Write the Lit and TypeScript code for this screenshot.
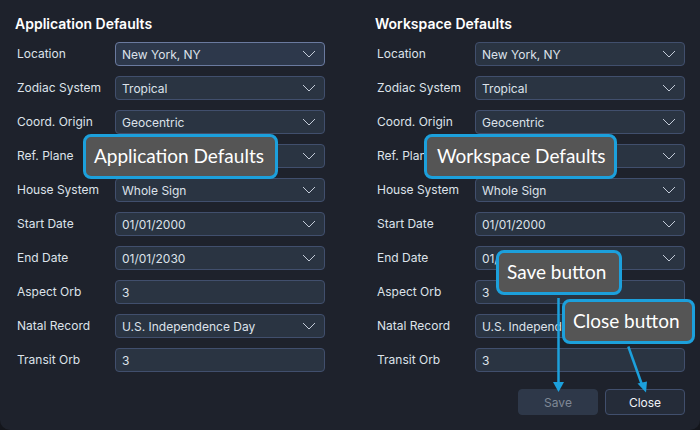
import { LitElement, html, css, svg } from "lit";
import { customElement } from "lit/decorators.js";

type Field = { label: string; value: string; select: boolean; focus?: boolean };

// the Ref. Plane value sits behind the callouts in the reference, so it stays empty
const fields = (focusFirst: boolean): Field[] => [
  { label: "Location", value: "New York, NY", select: true, focus: focusFirst },
  { label: "Zodiac System", value: "Tropical", select: true },
  { label: "Coord. Origin", value: "Geocentric", select: true },
  { label: "Ref. Plane", value: "", select: true },
  { label: "House System", value: "Whole Sign", select: true },
  { label: "Start Date", value: "01/01/2000", select: true },
  { label: "End Date", value: "01/01/2030", select: true },
  { label: "Aspect Orb", value: "3", select: false },
  { label: "Natal Record", value: "U.S. Independence Day", select: true },
  { label: "Transit Orb", value: "3", select: false },
];

const chevron = html`<svg class="chev" width="14" height="8" viewBox="0 0 14 8" fill="none" stroke="#c3cbd8" stroke-width="1"><path d="M1 1l6 6 6-6"/></svg>`;

const arrows = svg`
  <path d="M558.5 298V383" stroke="#1ca0dc" stroke-width="2.500"/>
  <path d="M553 382h11l-5.500 10z" fill="#1ca0dc"/>
  <path d="M628.300 346.500L641.700 384" stroke="#1ca0dc" stroke-width="2.500"/>
  <path d="M637.500 383.500l9.500-2 -1 11z" fill="#1ca0dc"/>
`;

@customElement("app-root")
export class AppRoot extends LitElement {
  static styles = css`
    :host {
      display: block;
      width: 700px;
      height: 430px;
      position: relative;
      overflow: hidden;
      background: #14161c;
      font-family: Inter, "Liberation Sans", sans-serif;
    }
    .window {
      height: 430px;
      box-sizing: border-box;
      background: #1e222c;
      border-radius: 0 0 10px 10px;
      padding: 15px;
      display: flex;
      flex-direction: column;
    }
    .cols {
      display: grid;
      grid-template-columns: 310px 310px;
      column-gap: 50px;
    }
    h2 {
      margin: 0 0 9px;
      font-size: 14px;
      line-height: 18px;
      font-weight: 600;
      color: #ffffff;
    }
    .rows {
      display: grid;
      row-gap: 10px;
    }
    .row {
      display: grid;
      grid-template-columns: 100px 210px;
      height: 24px;
      align-items: center;
    }
    .label {
      padding: 0 0 2px 2px;
      font-size: 12px;
      color: #dde2ea;
    }
    .field {
      box-sizing: border-box;
      height: 24px;
      display: flex;
      align-items: center;
      justify-content: space-between;
      padding: 0 8px 0 6px;
      background: #2a3442;
      border: 1px solid #414f6d;
      border-radius: 4px;
      font-size: 12px;
      color: #dde2ea;
    }
    .field.focus {
      background: #2d384b;
      border-color: #6a7a9f;
    }
    .chev {
      flex: none;
      margin-top: -1px;
    }
    .actions {
      margin-top: auto;
      display: flex;
      justify-content: flex-end;
      gap: 7px;
    }
    button {
      width: 80px;
      height: 26px;
      padding: 0;
      border-radius: 4px;
      font: inherit;
      font-size: 12px;
      background: #252c39;
      border: 1px solid #414f6d;
      color: #f0f2f6;
    }
    button[disabled] {
      background: #2e3849;
      border-color: #2e3849;
      color: #7f8896;
    }
    .callout {
      position: absolute;
      box-sizing: border-box;
      height: 45px;
      display: flex;
      align-items: center;
      padding: 0 0 2px 8px;
      background: #555555;
      border: 3px solid #1ca0dc;
      border-radius: 8px;
      font-family: Lato, "Open Sans", sans-serif;
      font-size: 19px;
      color: #ffffff;
      white-space: nowrap;
    }
    .app {
      left: 83px;
      top: 134px;
      width: 195px;
    }
    .work {
      left: 424px;
      top: 134px;
      width: 193px;
      padding-left: 10px;
    }
    .save {
      left: 496px;
      top: 250px;
      width: 126px;
    }
    .close {
      left: 562px;
      top: 299px;
      width: 133px;
    }
    .arrows {
      position: absolute;
      inset: 0;
      pointer-events: none;
    }
  `;

  column(title: string, focusFirst: boolean) {
    return html`<section>
      <h2>${title}</h2>
      <div class="rows">
        ${fields(focusFirst).map(
          (f) => html`<div class="row">
            <span class="label">${f.label}</span>
            <div class="field ${f.focus ? "focus" : ""}">
              <span>${f.value}</span>${f.select ? chevron : null}
            </div>
          </div>`
        )}
      </div>
    </section>`;
  }

  render() {
    return html`
      <div class="window">
        <div class="cols">
          ${this.column("Application Defaults", true)}
          ${this.column("Workspace Defaults", false)}
        </div>
        <div class="actions">
          <button disabled>Save</button>
          <button>Close</button>
        </div>
      </div>
      <svg class="arrows" width="700" height="430">${arrows}</svg>
      <div class="callout app">Application Defaults</div>
      <div class="callout work">Workspace Defaults</div>
      <div class="callout save">Save button</div>
      <div class="callout close">Close button</div>
    `;
  }
}
